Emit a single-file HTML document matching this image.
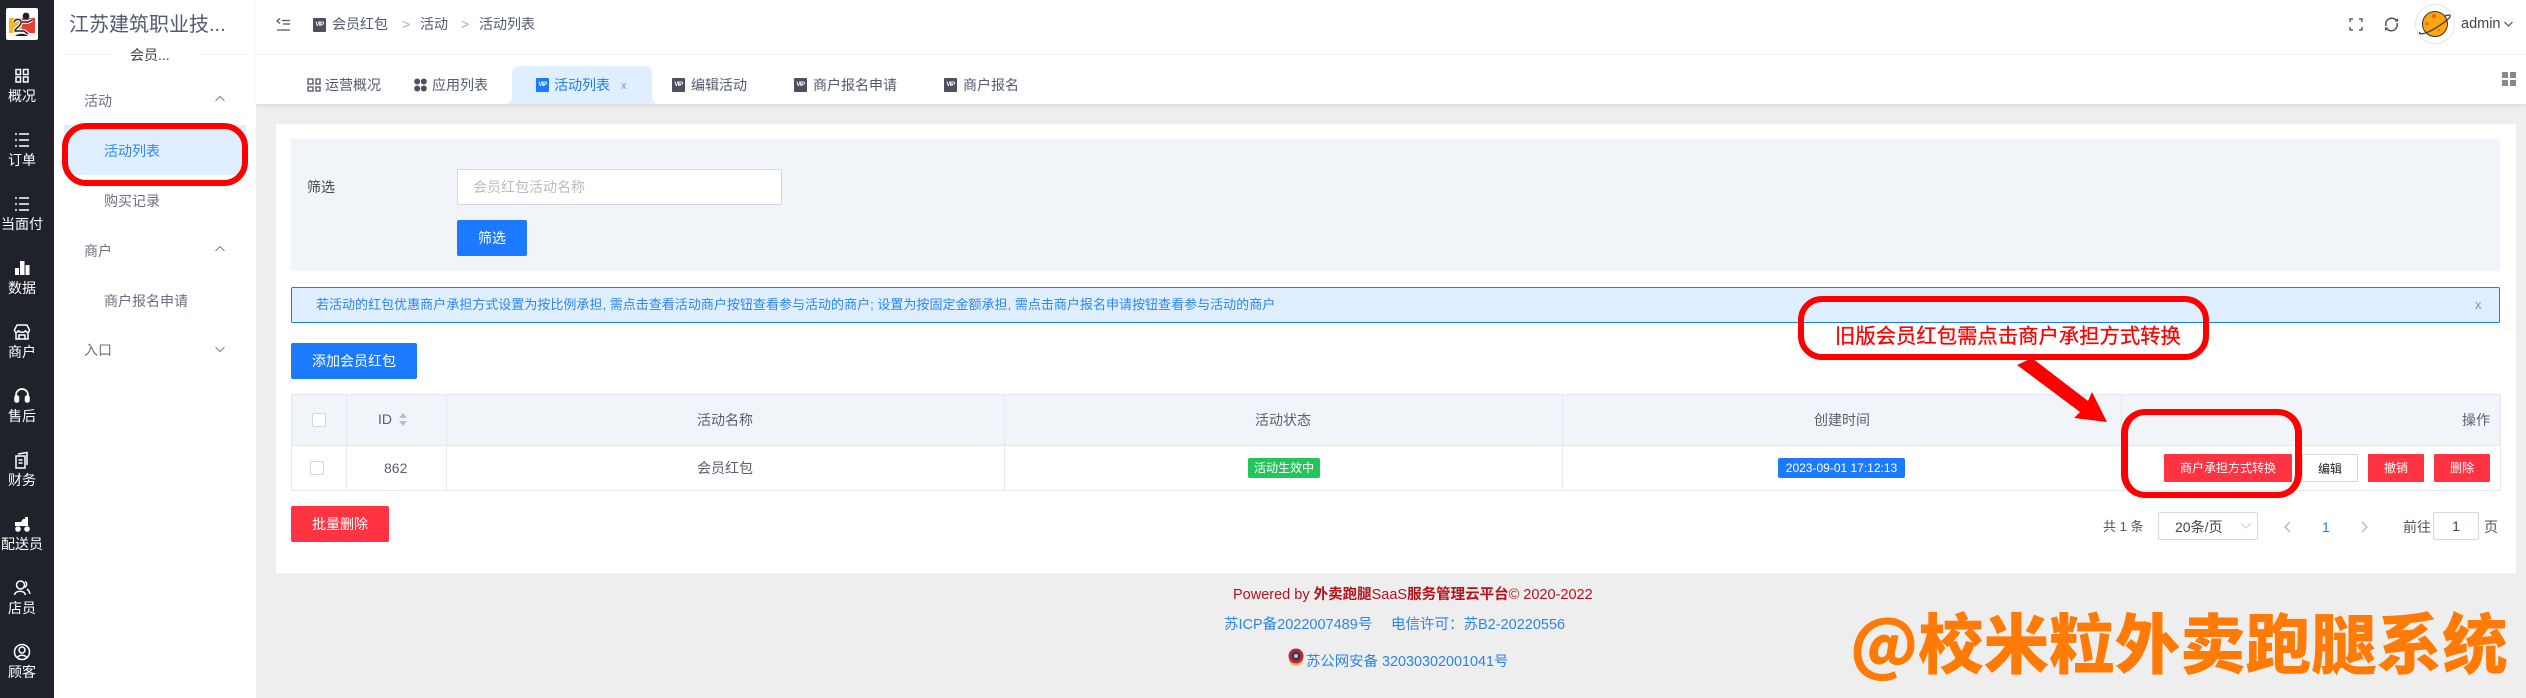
<!DOCTYPE html>
<html><head><meta charset="utf-8"><style>
html,body{margin:0;padding:0;width:2526px;height:698px;overflow:hidden;background:#eee}
body{position:relative;font-family:"Liberation Sans","Noto Sans CJK SC",sans-serif;font-size:14px;color:#515a6e}
div,span,svg{position:absolute;box-sizing:border-box}
.t{white-space:nowrap;line-height:20px;height:20px}
.c{transform:translateX(-50%)}
.s{color:#fff;font-size:14px;left:0;width:44px;text-align:center;white-space:nowrap;line-height:20px}
.i{left:13px;width:18px;height:18px;fill:none;stroke:#fff;stroke-width:1.5}
.b{height:36px;line-height:36px;text-align:center;color:#fff;border-radius:2px;background:#1b7aff}
.r{height:28px;line-height:28px;text-align:center;color:#fff;font-size:12px;background:#ff3342;border-radius:1px;top:454px}
.v{width:13px;height:14px;background:#4b4f5f;border-radius:1px;color:#fff;font-size:6px;line-height:15px;text-align:center;font-weight:bold;letter-spacing:-.5px;overflow:hidden}
.bd{background:#e4e7f0}
.red{border:6px solid #f00;border-radius:24px}
</style></head><body>

<div style="left:0;top:0;width:54px;height:698px;background:#1f222b"></div>
<div style="left:54px;top:0;width:202px;height:698px;background:#fff"></div>
<div style="left:256px;top:0;width:2270px;height:104px;background:#fff;box-shadow:0 2px 4px rgba(0,0,0,.07)"></div>
<div style="left:256px;top:54px;width:2270px;height:1px;background:#f0f0f0"></div>

<!-- logo -->
<div style="left:6px;top:8px;width:32px;height:32px;background:#fff;border-radius:2px"></div>
<svg style="left:6px;top:8px" width="32" height="32" viewBox="0 0 32 32">
<rect x="3" y="10" width="13" height="15" fill="#f3b733"/><rect x="16" y="10" width="13" height="15" fill="#e8412f"/>
<circle cx="20" cy="8" r="3.4" fill="#1d2233"/>
<path d="M8 14c2-4 8-3 7 1s-6 5-6 8h9l4 3M16 14l6 0 4-2M7 29c3-4 13-4 16 0" fill="none" stroke="#fff" stroke-width="3.6"/>
<path d="M8 14c2-4 8-3 7 1s-6 5-6 8h9l4 3M16 14l6 0 4-2" fill="none" stroke="#1d2233" stroke-width="1.5"/>
<path d="M9 28c3-3 10-3 13 0z" fill="#1d2233"/>
</svg>

<!-- dark sidebar -->
<svg class="i" style="top:67px" viewBox="0 0 18 18"><rect x="3" y="2.500" width="4.500" height="5"/><rect x="10.500" y="2.500" width="4.500" height="5"/><rect x="3" y="10" width="4.500" height="5"/><rect x="10.500" y="10" width="4.500" height="5"/></svg>
<div class="s" style="top:86px">概况</div>
<svg class="i" style="top:131px" viewBox="0 0 18 18"><path d="M6 3h10M6 9h10M6 15h10M2 3h2M2 9h2M2 15h2"/></svg>
<div class="s" style="top:150px">订单</div>
<svg class="i" style="top:195px" viewBox="0 0 18 18"><path d="M6 3h10M6 9h10M6 15h10M2 3h2M2 9h2M2 15h2"/></svg>
<div class="s" style="top:214px">当面付</div>
<svg class="i" style="top:259px;stroke:none;fill:#fff" viewBox="0 0 18 18"><rect x="2" y="9" width="4" height="7"/><rect x="7" y="2" width="4.500" height="14"/><rect x="12.500" y="6" width="4" height="10"/></svg>
<div class="s" style="top:278px">数据</div>
<svg class="i" style="top:323px" viewBox="0 0 18 18"><path d="M4 2h10l2.500 5c0 3-4 3-4 0 0 3-7 3-7 0 0 3-4 3-4 0zM3 9v7h12V9M6 16v-4h6v4"/></svg>
<div class="s" style="top:342px">商户</div>
<svg class="i" style="top:387px" viewBox="0 0 18 18"><path d="M3 10V8a6 6 0 0 1 12 0v2" stroke-width="1.700"/><rect x="2" y="9" width="3.500" height="6" rx="1.500" fill="#fff"/><rect x="12.500" y="9" width="3.500" height="6" rx="1.500" fill="#fff"/></svg>
<div class="s" style="top:406px">售后</div>
<svg class="i" style="top:451px" viewBox="0 0 18 18"><path d="M5 3l9-1.500V14M3 5h9v12H3zM5.500 9h4M5.500 12h4"/></svg>
<div class="s" style="top:470px">财务</div>
<svg class="i" style="top:515px;stroke:none;fill:#fff" viewBox="0 0 18 18"><path d="M2 7h6l2-3h2V2h3v9H2z"/><circle cx="5" cy="14" r="2.800"/><circle cx="14" cy="14" r="2.800"/></svg>
<div class="s" style="top:534px">配送员</div>
<svg class="i" style="top:579px" viewBox="0 0 18 18"><circle cx="7.500" cy="6" r="4"/><path d="M1.500 16c1-5 10-5 11 0M12 2.500c2 1 2.500 4-.5 6M14 10c1.500 1 2.500 3 3 5"/></svg>
<div class="s" style="top:598px">店员</div>
<svg class="i" style="top:643px" viewBox="0 0 18 18"><circle cx="9" cy="9" r="7.500"/><circle cx="9" cy="7" r="3"/><path d="M4.500 14.500c1.500-3 7.500-3 9 0"/></svg>
<div class="s" style="top:662px">顾客</div>

<!-- secondary -->
<div class="t" style="left:69px;top:15px;font-size:20px;color:#515a6e;line-height:20px;letter-spacing:0">江苏建筑职业技...</div>
<div style="left:64px;top:54px;width:46px;height:1px;background:#f0f0f0"></div>
<div style="left:200px;top:54px;width:46px;height:1px;background:#f0f0f0"></div>
<div class="t" style="left:130px;top:45px;color:#3a4152">会员...</div>
<div class="t" style="left:84px;top:91px;color:#6b7080">活动</div>
<svg style="left:215px;top:95px" width="10" height="7"><path d="M.5 6L5 1.500 9.500 6" fill="none" stroke="#777c8a"/></svg>
<div style="left:64px;top:125px;width:182px;height:50px;background:#e0efff"></div>
<div class="t" style="left:104px;top:141px;color:#2b85f5">活动列表</div>
<div class="t" style="left:104px;top:191px;color:#6b7080">购买记录</div>
<div class="t" style="left:84px;top:241px;color:#6b7080">商户</div>
<svg style="left:215px;top:245px" width="10" height="7"><path d="M.5 6L5 1.500 9.500 6" fill="none" stroke="#777c8a"/></svg>
<div class="t" style="left:104px;top:291px;color:#6b7080">商户报名申请</div>
<div class="t" style="left:84px;top:340px;color:#6b7080">入口</div>
<svg style="left:215px;top:346px" width="10" height="7"><path d="M.5 1L5 5.500 9.500 1" fill="none" stroke="#777c8a"/></svg>

<!-- header -->
<svg style="left:276px;top:17px" width="15" height="14" viewBox="0 0 15 14"><path d="M6 3.500h8M7 7h7M1 13h13M4 1.500L1 4l3 2.500" fill="none" stroke="#555" stroke-width="1.300"/></svg>
<div class="v" style="left:313px;top:18px">VIP</div>
<div class="t" style="left:332px;top:14px">会员红包</div>
<div class="t" style="left:402px;top:14px;color:#aaa">&gt;</div>
<div class="t" style="left:420px;top:14px">活动</div>
<div class="t" style="left:461px;top:14px;color:#aaa">&gt;</div>
<div class="t" style="left:479px;top:14px">活动列表</div>

<svg style="left:2349px;top:18px" width="14" height="13" viewBox="0 0 14 13"><path d="M1 4V1h3M10 1h3v3M13 9v3h-3M4 12H1V9" fill="none" stroke="#444" stroke-width="1.300"/></svg>
<svg style="left:2384px;top:17px" width="15" height="15" viewBox="0 0 15 15"><path d="M2 9A6 6 0 0 1 12 3M13 6A6 6 0 0 1 3 12" fill="none" stroke="#444" stroke-width="1.400"/><path d="M10.500 4.500h3.500V1zM4.500 10.500H1V14z" fill="#444"/></svg>
<svg style="left:2415px;top:4px" width="40" height="40" viewBox="0 0 40 40"><circle cx="20" cy="20" r="19.500" fill="#fff" stroke="#e4e4e4"/><circle cx="20" cy="20" r="12.500" fill="#ffa50d" stroke="#333"/><path d="M5 28c-2 3 3 2 8 0s18-10 22-15c1-3-3-2-5-1" fill="none" stroke="#333" stroke-width="1.200"/><circle cx="19" cy="12" r="2" fill="#f4581e"/><circle cx="12" cy="20" r="1.500" fill="#f4581e"/><circle cx="24" cy="26" r="1" fill="#f4581e"/></svg>
<div class="t" style="left:2461px;top:14px;font-size:14.500px;color:#444">admin</div>
<svg style="left:2504px;top:21px" width="9" height="6"><path d="M.5 1L4.500 5 8.500 1" fill="none" stroke="#444" stroke-width="1.100"/></svg>

<!-- tabs -->
<svg style="left:505px;top:66px" width="154" height="38" viewBox="0 0 154 38"><path d="M0 38c5 0 7-3 7-8V8q0-8 8-8h124q8 0 8 8v22c0 5 2 8 7 8z" fill="#e0efff"/></svg>
<svg style="left:307px;top:78px" width="14" height="14" viewBox="0 0 14 14"><path d="M1 1h5v5H1zM9 1h4v5H9zM1 9h5v4H1zM9 9h4v4H9z" fill="none" stroke="#4b4f5f" stroke-width="1.300"/></svg>
<div class="t" style="left:325px;top:75px">运营概况</div>
<svg style="left:414px;top:78px" width="13" height="14" viewBox="0 0 13 14"><circle cx="3.200" cy="3.500" r="3" fill="#4b4f5f"/><circle cx="9.800" cy="3.500" r="3" fill="#4b4f5f"/><circle cx="3.200" cy="10.500" r="3" fill="#4b4f5f"/><circle cx="9.800" cy="10.500" r="3" fill="#4b4f5f"/></svg>
<div class="t" style="left:432px;top:75px">应用列表</div>
<div class="v" style="left:536px;top:78px;background:#1b7aff">VIP</div>
<div class="t" style="left:554px;top:75px;color:#1b7aff">活动列表</div>
<div class="t" style="left:621px;top:76px;color:#5b9cf5;font-size:11px">x</div>
<div class="v" style="left:672px;top:78px">VIP</div>
<div class="t" style="left:691px;top:75px">编辑活动</div>
<div class="v" style="left:794px;top:78px">VIP</div>
<div class="t" style="left:813px;top:75px">商户报名申请</div>
<div class="v" style="left:944px;top:78px">VIP</div>
<div class="t" style="left:963px;top:75px">商户报名</div>
<svg style="left:2502px;top:72px" width="14" height="14"><path d="M0 0h6v6H0zM8 0h6v6H8zM0 8h6v6H0zM8 8h6v6H8z" fill="#888"/></svg>

<!-- card -->
<div style="left:276px;top:124px;width:2240px;height:449px;background:#fff"></div>
<div style="left:291px;top:139px;width:2209px;height:132px;background:#f1f4f9"></div>
<div class="t" style="left:307px;top:177px;color:#444">筛选</div>
<div style="left:457px;top:169px;width:325px;height:36px;background:#fff;border:1px solid #d4d7e0;border-radius:2px"></div>
<div class="t" style="left:473px;top:177px;color:#b9bcc5">会员红包活动名称</div>
<div class="b" style="left:457px;top:220px;width:70px">筛选</div>

<div style="left:291px;top:287px;width:2209px;height:36px;background:#e0efff;border:1px solid #1b7aff;border-radius:2px"></div>
<div class="t" style="left:316px;top:295px;font-size:13px;color:#2b85f5;letter-spacing:.02px">若活动的红包优惠商户承担方式设置为按比例承担, 需点击查看活动商户按钮查看参与活动的商户; 设置为按固定金额承担, 需点击商户报名申请按钮查看参与活动的商户</div>
<div class="t" style="left:2475px;top:295px;color:#5b9cf5;font-size:13px">x</div>

<div class="b" style="left:291px;top:343px;width:126px">添加会员红包</div>

<!-- table -->
<div style="left:291px;top:394px;width:2209px;height:51px;background:#f1f4f9"></div>
<div class="bd" style="left:291px;top:394px;width:2209px;height:1px"></div>
<div class="bd" style="left:291px;top:445px;width:2209px;height:1px"></div>
<div class="bd" style="left:291px;top:490px;width:2209px;height:1px"></div>
<div class="bd" style="left:291px;top:394px;width:1px;height:97px"></div>
<div class="bd" style="left:2500px;top:394px;width:1px;height:97px"></div>
<div class="bd" style="left:346px;top:394px;width:1px;height:97px"></div>
<div class="bd" style="left:446px;top:394px;width:1px;height:97px"></div>
<div class="bd" style="left:1004px;top:394px;width:1px;height:97px"></div>
<div class="bd" style="left:1562px;top:394px;width:1px;height:97px"></div>
<div class="bd" style="left:2121px;top:394px;width:1px;height:51px"></div>
<div style="left:312px;top:413px;width:14px;height:14px;background:#fff;border:1px solid #d4d7e0;border-radius:2px"></div>
<div style="left:310px;top:461px;width:14px;height:14px;background:#fff;border:1px solid #d4d7e0;border-radius:2px"></div>
<div class="t" style="left:378px;top:409px;color:#5a5f6c">ID</div>
<svg style="left:398px;top:412px" width="10" height="15"><path d="M5 1l4 5H1zM5 14l4-5H1z" fill="#b9bcc5"/></svg>
<div class="t" style="left:384px;top:458px;color:#5a5f6c">862</div>
<div class="t c" style="left:725px;top:410px;color:#5a5f6c">活动名称</div>
<div class="t c" style="left:725px;top:458px;color:#5a5f6c">会员红包</div>
<div class="t c" style="left:1283px;top:410px;color:#5a5f6c">活动状态</div>
<div class="t c" style="left:1842px;top:410px;color:#5a5f6c">创建时间</div>
<div class="t" style="left:2462px;top:410px;color:#5a5f6c">操作</div>
<div style="left:1248px;top:458px;width:72px;height:20px;line-height:20px;text-align:center;color:#fff;font-size:12px;background:#22c55a;border-radius:2px">活动生效中</div>
<div style="left:1778px;top:458px;width:127px;height:20px;line-height:20px;text-align:center;color:#fff;font-size:12px;background:#1b7aff;border-radius:2px">2023-09-01 17:12:13</div>
<div class="r" style="left:2164px;width:128px">商户承担方式转换</div>
<div class="r" style="left:2302px;width:56px;background:#fff;color:#222;border:1px solid #d4d7e0">编辑</div>
<div class="r" style="left:2368px;width:56px">撤销</div>
<div class="r" style="left:2434px;width:56px">删除</div>
<div class="b" style="left:291px;top:506px;width:98px;background:#ff3342">批量删除</div>

<!-- pagination -->
<div class="t" style="left:2103px;top:517px;color:#555;font-size:13px">共 1 条</div>
<div style="left:2158px;top:512px;width:100px;height:28px;border:1px solid #d4d7e0;border-radius:2px"></div>
<div class="t" style="left:2175px;top:517px;color:#444">20条/页</div>
<svg style="left:2241px;top:523px" width="10" height="6"><path d="M.5 .5L5 5 9.500 .5" fill="none" stroke="#c5c8d0"/></svg>
<svg style="left:2284px;top:521px" width="7" height="12"><path d="M6 1L1 6l5 5" fill="none" stroke="#a9adb8" stroke-width="1.200"/></svg>
<div class="t" style="left:2322px;top:517px;color:#1b7aff">1</div>
<svg style="left:2361px;top:521px" width="7" height="12"><path d="M1 1l5 5-5 5" fill="none" stroke="#a9adb8" stroke-width="1.200"/></svg>
<div class="t" style="left:2403px;top:517px;color:#555">前往</div>
<div style="left:2433px;top:512px;width:46px;height:28px;border:1px solid #d4d7e0;border-radius:2px"></div>
<div class="t c" style="left:2456px;top:516px;color:#444">1</div>
<div class="t" style="left:2484px;top:517px;color:#555">页</div>

<!-- footer -->
<div class="t" style="left:1233px;top:585px;color:#b5121b;font-size:14.500px">Powered by <b>外卖跑腿</b>SaaS<b>服务管理云平台</b>© 2020-2022</div>
<div class="t" style="left:1224px;top:615px;color:#2b85f0;font-size:14.500px">苏ICP备2022007489号</div>
<div class="t" style="left:1391px;top:615px;color:#2b85f0;font-size:14.500px">电信许可：苏B2-20220556</div>
<svg style="left:1287px;top:648px" width="18" height="19" viewBox="0 0 18 19"><path d="M2 12c0 4 4 6 7 6s7-2 7-6z" fill="#e5b45a"/><circle cx="9" cy="8" r="7.500" fill="#c8242a"/><circle cx="9" cy="8" r="4.500" fill="#1c3a8c"/><circle cx="9" cy="8" r="2" fill="#f2c14e"/></svg>
<div class="t" style="left:1306px;top:652px;color:#2b85f0;font-size:14.400px">苏公网安备 32030302001041号</div>

<!-- watermark -->
<div style="left:1850px;top:596px;height:88px;line-height:88px;font-size:65.500px;font-weight:900;color:#ff7b06;white-space:nowrap;font-family:'Noto Sans CJK SC','Liberation Sans',sans-serif">@校米粒外卖跑腿系统</div>

<!-- annotations -->
<div class="red" style="left:62px;top:123px;width:186px;height:63px"></div>
<div class="red" style="left:1798px;top:296px;width:411px;height:64px"></div>
<div class="t" style="left:1835px;top:327px;font-size:20.350px;color:#f00;-webkit-text-stroke:.3px #f00">旧版会员红包需点击商户承担方式转换</div>
<div class="red" style="left:2121px;top:409px;width:181px;height:89px;border-width:6px 7px"></div>
<svg style="left:2000px;top:350px" width="120" height="80" viewBox="2000 350 120 80"><path d="M2017 365L2032 358 2088 401 2092 392 2107 422 2074 418 2080 412z" fill="#f00"/></svg>
</body></html>
